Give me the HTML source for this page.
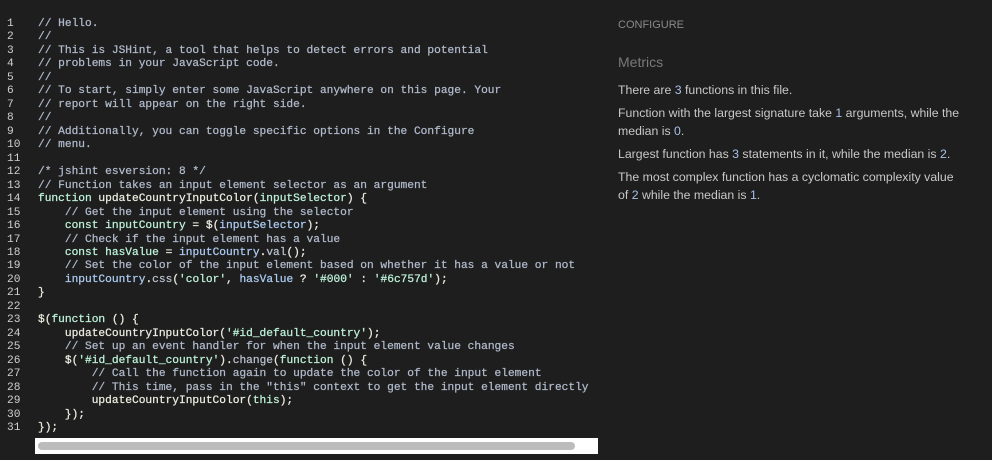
<!DOCTYPE html>
<html><head><meta charset="utf-8"><style>
html,body{margin:0;padding:0;background:#1e1e1e;width:992px;height:460px;overflow:hidden}
.ln{position:absolute;left:7px;top:18px;font:11.2px/13.47px "Liberation Mono",monospace;color:#d0d0d0;white-space:pre}
.code{position:absolute;left:38px;top:18px;font:11.2px/13.47px "Liberation Mono",monospace;color:#ececE0;white-space:pre;-webkit-text-stroke:0.25px currentColor}
.c{color:#b0bacb}.k{color:#bdf2da}.s{color:#bdf2da}.v{color:#acccf2}.p{color:#b8c0cc}
.sb{position:absolute;left:35px;top:438px;width:563px;height:16px;background:#fff}
.th{position:absolute;left:3px;top:4px;width:537px;height:8px;border-radius:4px;background:#bcbcbc}
.r{position:absolute;left:618px;top:0;width:360px;font-family:"Liberation Sans",sans-serif;color:#c8c8c8}
.cfg{position:absolute;top:19px;font-size:11px;color:#8a8a8a}
.m{position:absolute;top:54px;font-size:14px;color:#7a7a7a}
.t{position:absolute;top:81px;font-size:12.3px;line-height:18px;width:346px}
.t p{margin:0 0 5px}
.n{color:#a8c0e8}
</style></head><body>
<div class="ln">1
2
3
4
5
6
7
8
9
10
11
12
13
14
15
16
17
18
19
20
21
22
23
24
25
26
27
28
29
30
31</div>
<div class="code"><span class="c">// Hello.
//
// This is JSHint, a tool that helps to detect errors and potential
// problems in your JavaScript code.
//
// To start, simply enter some JavaScript anywhere on this page. Your
// report will appear on the right side.
//
// Additionally, you can toggle specific options in the Configure
// menu.</span>

<span class="c">/* jshint esversion: 8 */
// Function takes an input element selector as an argument</span>
<span class="k">function</span> updateCountryInputColor(<span class="k">inputSelector</span>) {
    <span class="c">// Get the input element using the selector</span>
    <span class="k">const inputCountry</span> = $(<span class="v">inputSelector</span>);
    <span class="c">// Check if the input element has a value</span>
    <span class="k">const hasValue</span> = <span class="v">inputCountry</span>.<span class="p">val</span>();
    <span class="c">// Set the color of the input element based on whether it has a value or not</span>
    <span class="v">inputCountry</span>.<span class="p">css</span>(<span class="s">'color'</span>, <span class="v">hasValue</span> ? <span class="s">'#000'</span> : <span class="s">'#6c757d'</span>);
}

$(<span class="k">function</span> () {
    updateCountryInputColor(<span class="s">'#id_default_country'</span>);
    <span class="c">// Set up an event handler for when the input element value changes</span>
    $(<span class="s">'#id_default_country'</span>).<span class="p">change</span>(<span class="k">function</span> () {
        <span class="c">// Call the function again to update the color of the input element
        // This time, pass in the "this" context to get the input element directly</span>
        updateCountryInputColor(<span class="k">this</span>);
    });
});</div>
<div class="sb"><div class="th"></div></div>
<div class="r">
<div class="cfg">CONFIGURE</div>
<div class="m">Metrics</div>
<div class="t">
<p>There are <span class="n">3</span> functions in this file.</p>
<p>Function with the largest signature take <span class="n">1</span> arguments, while the median is <span class="n">0</span>.</p>
<p>Largest function has <span class="n">3</span> statements in it, while the median is <span class="n">2</span>.</p>
<p>The most complex function has a cyclomatic complexity value<br>of <span class="n">2</span> while the median is <span class="n">1</span>.</p>
</div></div>
</body></html>
